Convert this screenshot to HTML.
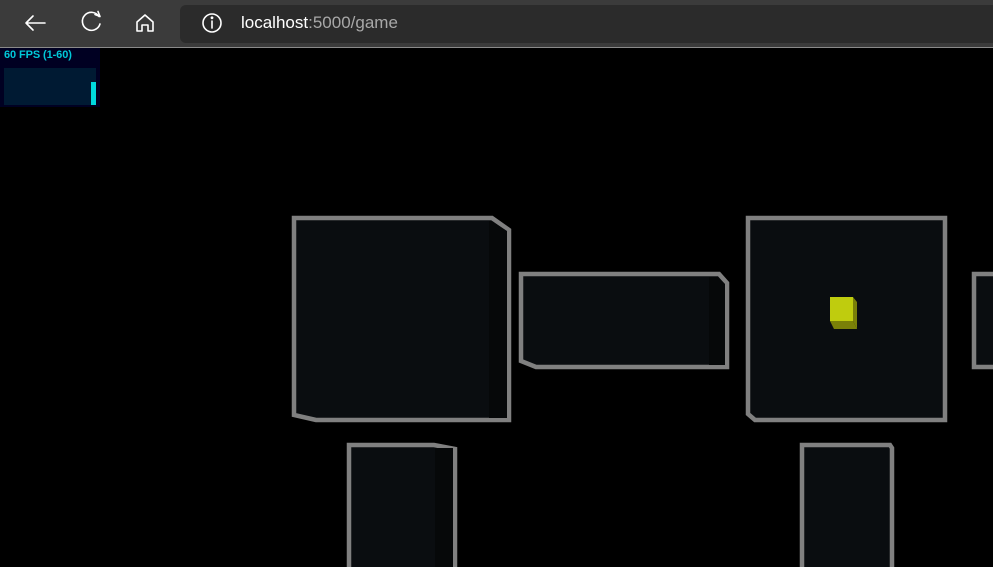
<!DOCTYPE html>
<html><head><meta charset="utf-8"><style>
html,body{margin:0;padding:0;width:993px;height:567px;overflow:hidden;background:#000;font-family:"Liberation Sans",sans-serif}
.bar{position:absolute;left:0;top:0;width:993px;height:47px;background:#3b3b3b;border-bottom:1px solid #8a8a8a}
.addr{position:absolute;left:180px;top:5px;width:830px;height:38px;background:#2b2b2b;border-radius:6px}
.url{position:absolute;left:241px;top:13px;font-size:17px;color:#fff}
.url span{color:#a8a8a8}
.fps{position:absolute;left:0;top:48px;width:100px;height:59px;background:#000022}
.fps .t{position:absolute;left:4px;top:1px;font-size:11px;font-weight:bold;color:#00c8d8;letter-spacing:-0.1px}
.fps .g{position:absolute;left:4px;top:20px;width:92px;height:37px;background:#001a33}
.fps .b{position:absolute;left:91px;top:34px;width:5px;height:23px;background:#00d8e0}
</style></head><body>
<div class="bar">
<div class="addr"></div>
<svg width="993" height="47" style="position:absolute;left:0;top:0" fill="none" stroke="#fff" stroke-width="1.6" stroke-linecap="round" stroke-linejoin="round">
<path d="M26 23H45M26 23L33 16M26 23L33 30"/>
<path d="M99 16.5A9 9 0 1 0 100 24"/><path d="M95 14.5L100 16.5L98 11.5"/>
<path d="M137 31V22L145 15L153 22V31H148V25H142V31Z"/>
<circle cx="212" cy="23" r="9"/><path d="M212 21V28"/><circle cx="212" cy="17.8" r="0.6" fill="#fff"/>
</svg>
<div class="url">localhost<span>:5000/game</span></div>
</div>
<div class="fps"><div class="t">60 FPS (1-60)</div><div class="g"></div><div class="b"></div></div>
<svg width="993" height="567" style="position:absolute;left:0;top:0">
<g stroke="#808080" stroke-width="4.5" fill="#0a0d10" stroke-linejoin="miter">
<polygon points="294,218 492,218 509,230 509,420 316,420 294,415"/>
<polygon points="521,274 719,274 727,283 727,367 536,367 521,361"/>
<polygon points="748,218 945,218 945,420 755,420 748,414"/>
<polygon points="974,274 1000,274 1000,367 974,367"/>
<polygon points="349,445 434,445 455,449 455,580 349,580"/>
<polygon points="802,445 890,445 892,448 892,580 802,580"/>
</g>
<g fill="#060809">
<polygon points="489,221 492,221 507,231 507,418 489,418"/>
<rect x="435" y="448" width="18" height="130"/>
<polygon points="709,277 718,277 725,284 725,365 709,365"/>
</g>
<polygon points="853,297 857,302 857,329 853,321" fill="#7a8008"/>
<polygon points="830,321 853,321 857,329 834,329" fill="#7a8008"/>
<rect x="830" y="297" width="23" height="24" fill="#bfcc0e"/>
</svg>
</body></html>
